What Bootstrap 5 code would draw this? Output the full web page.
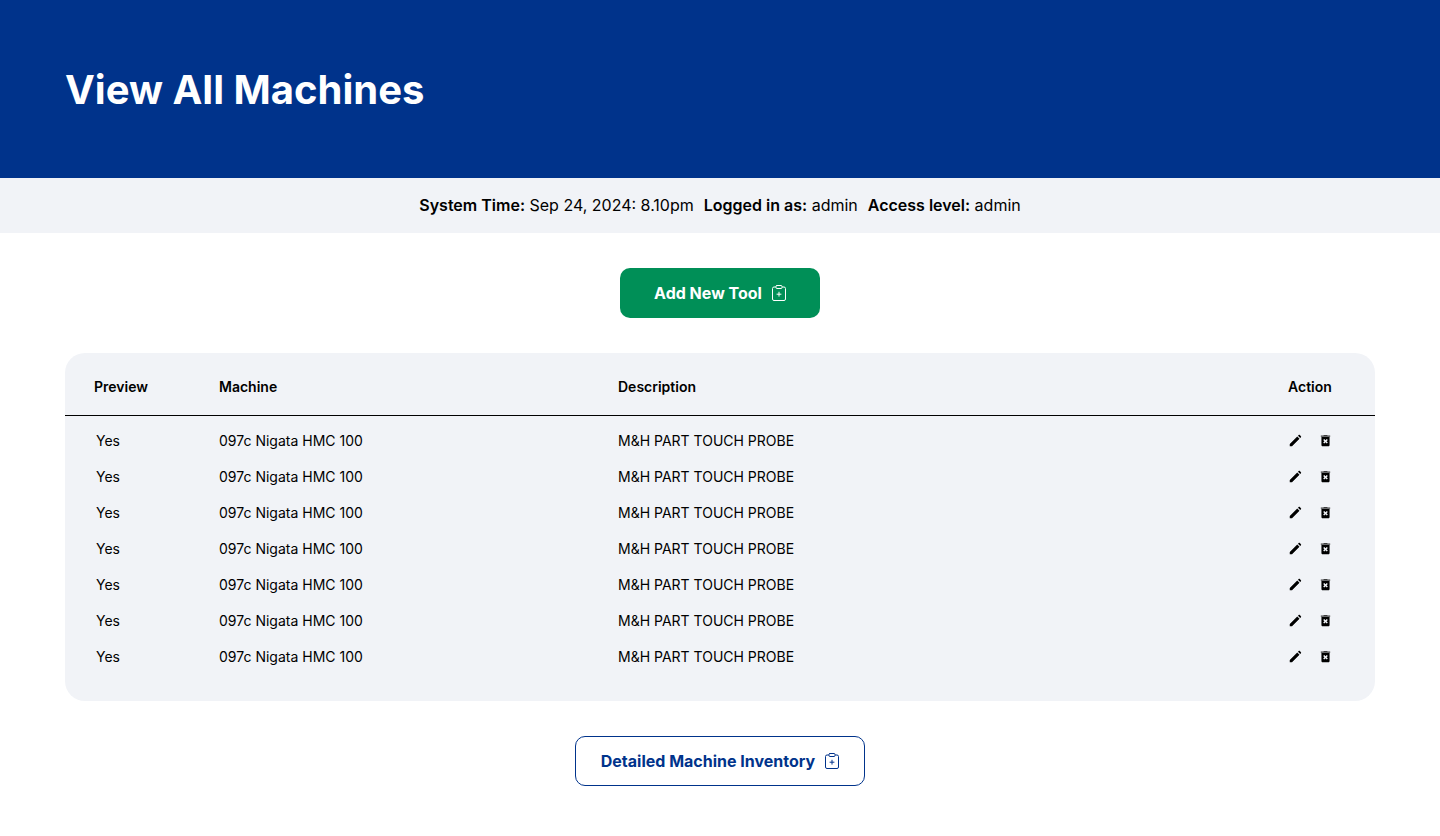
<!DOCTYPE html>
<html lang="en">
<head>
<meta charset="utf-8">
<meta name="viewport" content="width=device-width, initial-scale=1">
<title>View All Machines</title>
<link href="https://cdn.jsdelivr.net/npm/bootstrap@5.3.0/dist/css/bootstrap.min.css" rel="stylesheet">
<style>
:root { --brand: #00338b; --panel: #f1f3f7; --go: #008f57; }
body { font-family: Inter, "Liberation Sans", sans-serif; color: #000; background: #fff; }
.page-gutter { padding-left: 65px; padding-right: 65px; }
.page-head { background: var(--brand); padding-top: 65px; padding-bottom: 63px; }
.page-head h1 { font-size: 40px; line-height: 50px; font-weight: 700; }
.status-bar { background: var(--panel); padding: 15px 0 16px; line-height: 24px; column-gap: 10px; }
.status-bar strong { font-weight: 600; }
.page-body { padding-top: 35px; padding-bottom: 35px; gap: 35px; }
.btn-page { height: 50px; border-radius: 10px; font-weight: 700; line-height: 24px; gap: 9px; }
.btn-add { background: var(--go); color: #fff; padding: 0 32px 0 33px; }
.btn-add:hover { background: #007a4a; color: #fff; }
.btn-inventory { border-color: var(--brand); color: var(--brand); padding: 0 24px 0 25px; }
.btn-inventory:hover { background: var(--brand); color: #fff; }
.machine-panel { background: var(--panel); border-radius: 20px; padding-bottom: 26px; }
.machine-list { font-size: 14px; line-height: 20px; table-layout: fixed; }
.machine-list th { font-weight: 600; padding: 24px 0 18px; border-bottom: 1px solid #000; }
.machine-list td { padding: 8px 0; }
.machine-list tbody tr:first-child td { padding-top: 15px; }
.machine-list th:first-child { padding-left: 29px; }
.machine-list td:first-child { padding-left: 31px; }
.col-preview { width: 154px; }
.col-machine { width: 399px; }
.col-action { width: 87px; }
.row-actions { gap: 15px; height: 20px; }
.icon-btn { width: 15px; height: 19px; }
</style>
</head>
<body>
<svg class="d-none" aria-hidden="true">
  <symbol id="pencil" viewBox="0 0 24 24"><path fill="currentColor" d="M2.800 21.200v-3.600L14.800 5.600l3.600 3.600-12 12zM16 4.400l1.100-1.100c.5-.5 1.300-.5 1.800 0l1.800 1.800c.5.5.5 1.300 0 1.800L19.600 8z"/></symbol>
  <symbol id="trash" viewBox="0 0 24 24"><path fill="currentColor" fill-rule="evenodd" d="M5.500 19c0 1.100.9 2 2 2h9c1.100 0 2-.9 2-2V6.300h-13zM8.300 11.200l1.700-1.700 2 2 2-2 1.700 1.700-2 2 2 2-1.700 1.700-2-2-2 2-1.700-1.700 2-2z"/><path fill="currentColor" fill-opacity=".75" d="M15.500 4l-1-1h-5l-1 1H4.500v2h15V4z"/></symbol>
  <symbol id="clipboard-plus" viewBox="0 0 16 16"><g fill="none" stroke="currentColor" stroke-linecap="round"><path d="M4.500 2H3a1.500 1.500 0 0 0-1.500 1.500V14A1.500 1.500 0 0 0 3 15.500h10a1.500 1.500 0 0 0 1.500-1.500V3.500A1.500 1.500 0 0 0 13 2h-1.500M8 7.200v4M6 9.200h4"/><rect x="5" y=".5" width="6" height="3" rx="1"/></g></symbol>
</svg>

<header class="page-head page-gutter text-white">
  <h1 class="m-0">View All Machines</h1>
</header>

<div class="status-bar d-flex flex-wrap justify-content-center">
  <span><strong>System Time:</strong> Sep 24, 2024: 8.10pm</span>
  <span><strong>Logged in as:</strong> admin</span>
  <span><strong>Access level:</strong> admin</span>
</div>

<main class="page-body page-gutter d-flex flex-column align-items-center">
  <button type="button" class="btn btn-page btn-add d-inline-flex align-items-center">Add New Tool
    <svg width="16" height="16" aria-hidden="true"><use href="#clipboard-plus"/></svg></button>

  <div class="machine-panel w-100 overflow-hidden">
    <table class="machine-list w-100">
      <colgroup><col class="col-preview"><col class="col-machine"><col><col class="col-action"></colgroup>
      <thead>
        <tr><th scope="col">Preview</th><th scope="col">Machine</th><th scope="col">Description</th><th scope="col">Action</th></tr>
      </thead>
      <tbody id="machines"></tbody>
    </table>
  </div>

  <button type="button" class="btn btn-page btn-inventory d-inline-flex align-items-center">Detailed Machine Inventory
    <svg width="16" height="16" aria-hidden="true"><use href="#clipboard-plus"/></svg></button>
</main>

<script>
const machines = Array.from({ length: 7 }, () => ({ preview: "Yes", name: "097c Nigata HMC 100", description: "M&amp;H PART TOUCH PROBE" }));
const iconButton = (icon, label) => `<button type="button" class="icon-btn btn border-0 p-0 d-flex align-items-center text-black" aria-label="${label}"><svg width="15" height="15" aria-hidden="true"><use href="#${icon}"/></svg></button>`;
document.getElementById("machines").innerHTML = machines.map(m =>
  `<tr><td>${m.preview}</td><td>${m.name}</td><td>${m.description}</td><td><div class="row-actions d-flex align-items-start">${iconButton("pencil", "Edit")}${iconButton("trash", "Delete")}</div></td></tr>`).join("");
</script>
<script src="https://cdn.jsdelivr.net/npm/bootstrap@5.3.0/dist/js/bootstrap.bundle.min.js"></script>
</body>
</html>
